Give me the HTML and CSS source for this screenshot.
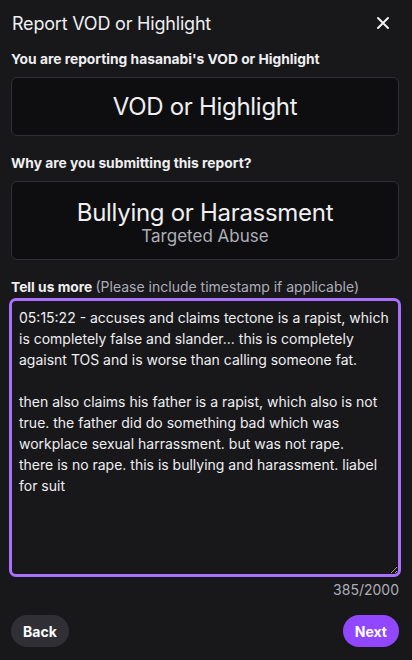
FILE: index.html
```
<!DOCTYPE html>
<html lang="en">
<head>
    <meta charset="UTF-8">
    <meta name="viewport" content="width=device-width, initial-scale=1.0">
    <title>Report VOD or Highlight</title>
    <link rel="stylesheet" href="styles.css">
</head>
<body>
    <div class="modal">
        <div class="header">
            <h1>Report VOD or Highlight</h1>
            <button class="close" aria-label="Close">
                <svg width="14" height="14" viewBox="0 0 14 14"><path d="M2 2 L12 12 M12 2 L2 12" stroke="#efeff1" stroke-width="2" stroke-linecap="round"/></svg>
            </button>
        </div>

        <p class="label">You are reporting hasanabi's VOD or Highlight</p>
        <div class="choice choice-single">
            <span class="choice-title">VOD or Highlight</span>
        </div>

        <p class="label">Why are you submitting this report?</p>
        <div class="choice choice-double">
            <span class="choice-title">Bullying or Harassment</span>
            <span class="choice-sub">Targeted Abuse</span>
        </div>

        <p class="label label-more">Tell us more <span class="hint">(Please include timestamp if applicable)</span></p>
        <textarea class="details">05:15:22 - accuses and claims tectone is a rapist, which is completely false and slander... this is completely agaisnt TOS and is worse than calling someone fat.

then also claims his father is a rapist, which also is not true. the father did do something bad which was workplace sexual harrassment. but was not rape.
there is no rape. this is bullying and harassment. liabel for suit</textarea>
        <div class="counter">385/2000</div>

        <div class="footer">
            <button class="btn btn-back">Back</button>
            <button class="btn btn-next">Next</button>
        </div>
    </div>
</body>
</html>
```

FILE: styles.css
```
body {
    margin: 0;
    background-color: #18181b;
    color: #efeff1;
    font-family: Inter, "Noto Sans", sans-serif;
}
.modal {
    padding: 10px 13px 0 11px;
}
.header {
    display: flex;
    justify-content: space-between;
    align-items: center;
    height: 26px;
    margin-left: 1px;
}
h1 {
    margin: 0;
    font-size: 18px;
    font-weight: 400;
    letter-spacing: -0.2px;
}
.close {
    background: none;
    border: none;
    padding: 0;
    margin-right: 9px;
    display: flex;
}
.label {
    margin: 15px 0 10px;
    font-size: 13.8px;
    font-weight: 700;
    line-height: 16px;
}
.choice {
    background-color: #0e0e10;
    border: 1px solid #303036;
    border-radius: 6px;
    display: flex;
    flex-direction: column;
    align-items: center;
    justify-content: center;
    box-sizing: border-box;
}
.choice-single {
    height: 59px;
}
.choice-double {
    height: 79px;
    padding-top: 2px;
}
.choice-title {
    font-size: 24px;
    line-height: 28px;
    letter-spacing: -0.3px;
}
.choice-sub {
    font-size: 17px;
    line-height: 18px;
    color: #adadb8;
}
.choice + .label {
    margin-top: 19px;
}
.label-more {
    margin-bottom: 3px;
}
.hint {
    font-weight: 400;
    color: #adadb8;
    font-size: 14px;
}
.details {
    display: block;
    width: calc(100% + 4px);
    margin-left: -2px;
    height: 279px;
    box-sizing: border-box;
    background-color: #18181b;
    color: #efeff1;
    border: 3px solid #a970ff;
    border-radius: 7px;
    padding: 6px 8px 5px 7px;
    font-family: Inter, "Noto Sans", sans-serif;
    font-size: 14px;
    line-height: 21px;
    resize: vertical;
    outline: none;
}
.counter {
    text-align: right;
    font-size: 14px;
    line-height: 16px;
    color: #adadb8;
    margin-top: 5px;
}
.footer {
    display: flex;
    justify-content: space-between;
    margin-top: 17px;
}
.btn {
    height: 32px;
    border: none;
    border-radius: 16px;
    padding: 0 12px;
    font-family: Inter, "Noto Sans", sans-serif;
    font-size: 14px;
    font-weight: 700;
    color: #ffffff;
    cursor: pointer;
}
.btn-back {
    background-color: #2f2f35;
}
.btn-next {
    background-color: #9147ff;
}
```
